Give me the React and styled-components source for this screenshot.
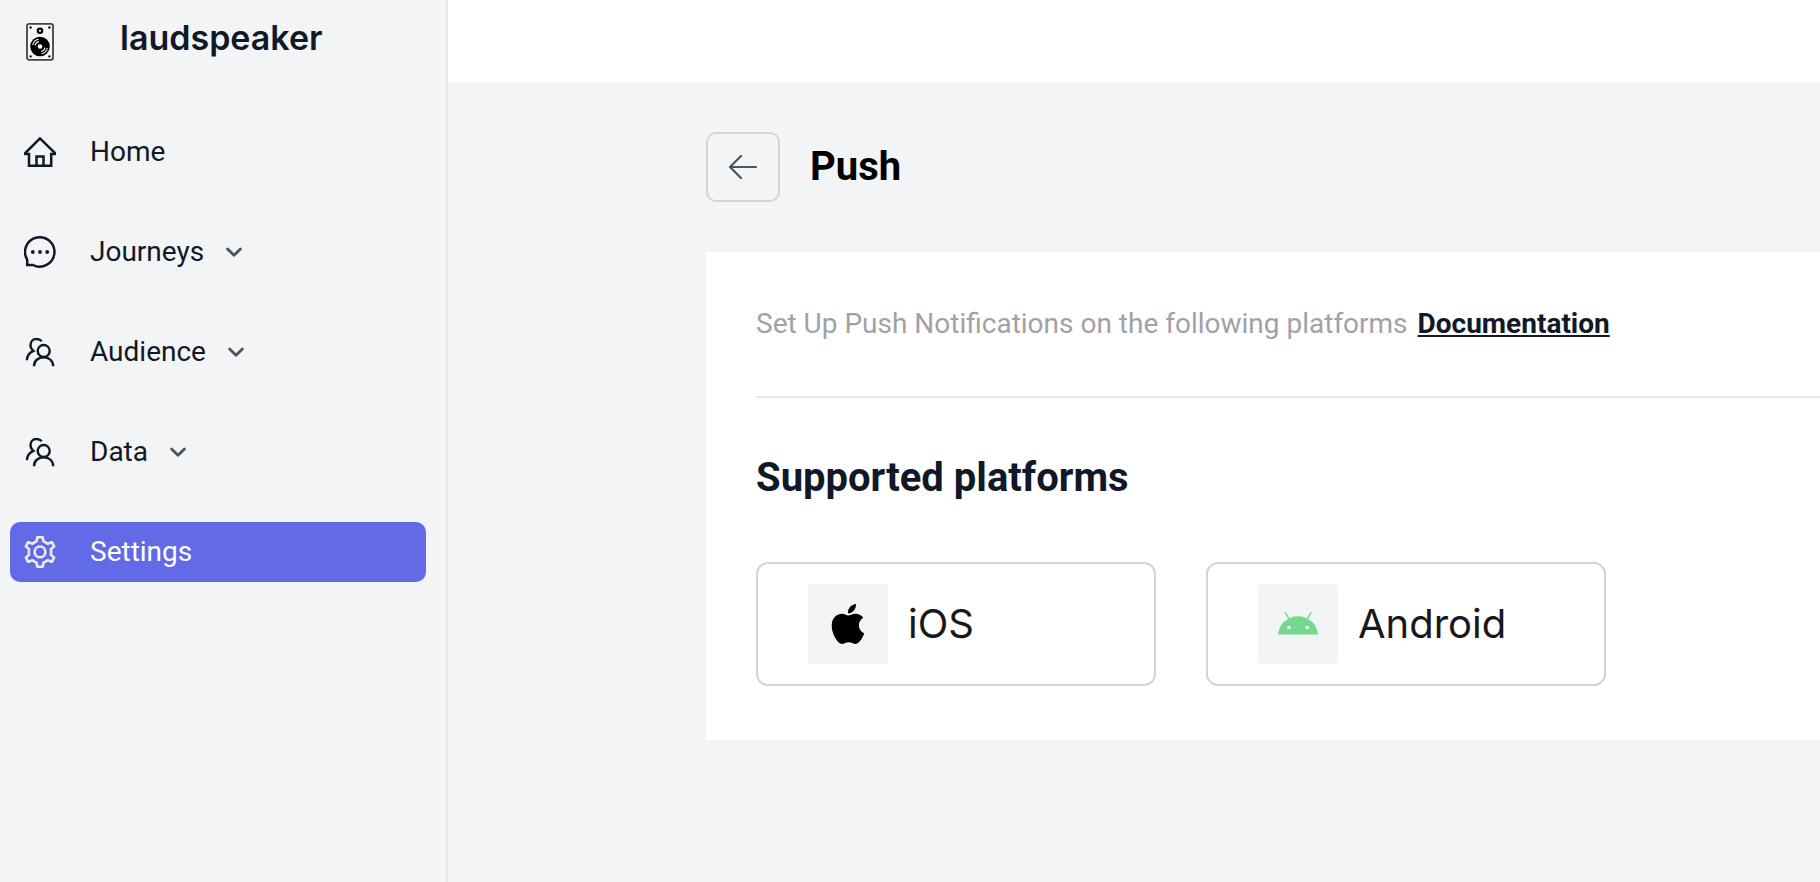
import React from "react";
import styled, { createGlobalStyle } from "styled-components";
import { SiApple } from "react-icons/si";

const GlobalStyle = createGlobalStyle`
  *, *::before, *::after { box-sizing: border-box; }
  body {
    margin: 0;
    background: #f3f4f6;
    color: #111827;
    font-family: Roboto, "Liberation Sans", sans-serif;
    font-size: 28px;
    line-height: 40px;
  }
  h1, h2, p, ul { margin: 0; padding: 0; }
  button { font: inherit; color: inherit; cursor: pointer; }
`;

const Layout = styled.div`
  display: flex;
  min-height: 100vh;
`;

const Sidebar = styled.aside`
  flex: 0 0 448px;
  border-right: 2px solid #e5e7eb;
`;

const Brand = styled.div`
  display: flex;
  align-items: center;
  gap: 64px;
  height: 82px;
  padding-left: 24px;
`;

const BrandName = styled.span`
  font-family: Inter, sans-serif;
  font-size: 34px;
  font-weight: 600;
  line-height: 40px;
  padding-bottom: 6px;
`;

const NavList = styled.ul`
  display: flex;
  flex-direction: column;
  gap: 40px;
  padding: 40px 20px 40px 10px;
  list-style: none;
`;

const NavLink = styled.a`
  display: flex;
  align-items: center;
  height: 60px;
  padding: 0 14px;
  border-radius: 10px;
  color: ${(p) => (p.$active ? "#ffffff" : "#111827")};
  background: ${(p) => (p.$active ? "#636ae8" : "transparent")};
  text-decoration: none;
`;

const NavLabel = styled.span`
  margin-left: 34px;
  margin-right: 20px;
`;

const Icon = styled.svg`
  display: block;
  flex: none;
  fill: none;
  stroke: currentColor;
`;

const Content = styled.div`
  flex: 1;
  min-width: 0;
`;

const TopBar = styled.header`
  height: 82px;
  background: #ffffff;
`;

const Page = styled.main`
  padding: 50px 0 50px 258px;
`;

const PageHeader = styled.div`
  display: flex;
  align-items: center;
  gap: 30px;
  margin-bottom: 50px;
`;

const BackButton = styled.button`
  display: flex;
  align-items: center;
  justify-content: center;
  width: 74px;
  height: 70px;
  padding: 0;
  border: 2px solid #d1d5db;
  border-radius: 10px;
  background: transparent;
  color: #4b5563;
`;

const PageTitle = styled.h1`
  color: #000000;
  font-size: 40px;
  font-weight: 700;
  line-height: 60px;
`;

const Panel = styled.section`
  padding: 50px 0 54px 50px;
  background: #ffffff;
`;

const Intro = styled.p`
  padding-bottom: 50px;
  border-bottom: 2px solid #e5e7eb;
  color: #a1a1a6;
  line-height: 44px;
`;

const DocLink = styled.a`
  margin-left: 10px;
  color: #111827;
  font-weight: 700;
  text-decoration: underline;
`;

const SectionTitle = styled.h2`
  margin: 50px 0 54px;
  font-size: 40px;
  font-weight: 700;
  line-height: 60px;
`;

const Platforms = styled.div`
  display: flex;
  flex-wrap: wrap;
  gap: 50px;
`;

const PlatformButton = styled.button`
  display: flex;
  align-items: center;
  gap: 20px;
  width: 400px;
  padding: 20px 50px;
  border: 2px solid #d1d5db;
  border-radius: 12px;
  background: #ffffff;
  color: #18181b;
  font-family: Inter, sans-serif;
  font-size: 40px;
  font-weight: 400;
  line-height: 60px;
`;

const Tile = styled.span`
  display: flex;
  align-items: center;
  justify-content: center;
  width: 80px;
  height: 80px;
  border-radius: 4px;
  background: #f3f4f6;
  color: #000000;
`;

const SpeakerLogo = () => (
  <Icon width="32" height="40" viewBox="0 0 32 40" aria-hidden="true">
    <rect x="3" y="2.8" width="26" height="36" rx="2" fill="#f6f6f7" stroke="#444" strokeWidth="1.8" />
    <g fill="#111" stroke="none">
      <circle cx="6.6" cy="6.5" r="1.2" />
      <circle cx="25.4" cy="6.5" r="1.2" />
      <circle cx="6.6" cy="35.4" r="1.2" />
      <circle cx="25.4" cy="35.4" r="1.2" />
      <circle cx="16" cy="25.5" r="9.8" fill="#000" />
      <circle cx="16" cy="25.5" r="2.3" fill="#fff" />
    </g>
    <circle cx="16" cy="9.8" r="2.2" stroke="#000" strokeWidth="2.2" fill="#fff" />
    <path d="M8.7 24A7.5 7.5 0 0 1 14.5 18.2M11 24.4A5.1 5.1 0 0 1 14.9 20.5M23.3 27A7.5 7.5 0 0 1 17.5 32.8M21 26.6A5.1 5.1 0 0 1 17.1 30.5" stroke="#fff" strokeWidth="1.1" />
  </Icon>
);

const HomeIcon = () => (
  <Icon width="32" height="32" viewBox="0 0 32 32" strokeWidth="2.5" aria-hidden="true">
    <path d="M16 2.4 1.2 17v.9H5V29.7h22.2V17.9H31V17zM12.5 29.7V20.5h7v9.2" />
  </Icon>
);

const ChatIcon = () => (
  <Icon width="32" height="32" viewBox="0 0 32 32" strokeWidth="2.5" aria-hidden="true">
    <path d="M3.2 23.6A14.7 14.7 0 1 1 9 29H3.2z" />
    <g fill="currentColor" stroke="none">
      <circle cx="8.8" cy="16" r="1.9" />
      <circle cx="16" cy="16" r="1.9" />
      <circle cx="23.2" cy="16" r="1.9" />
    </g>
  </Icon>
);

const PeopleIcon = () => (
  <Icon width="32" height="32" viewBox="0 0 32 32" strokeWidth="2.4" aria-hidden="true">
    <circle cx="19.7" cy="15" r="6" />
    <path d="M10 30.2C10 25 14.3 21.2 19.7 21.2S29.2 25 29.2 30.2" />
    <path d="M17.8 5.3A7 7 0 0 0 12.4 3C8.800 3 6.500 5.700 6.500 9 6.500 11.500 7.700 13.500 9.400 14.900 5.700 16.600 3.100 19.800 2.900 24.200" />
  </Icon>
);

const GearIcon = () => (
  <Icon width="32" height="32" viewBox="0 0 32 32" strokeWidth="2.6" strokeLinejoin="round" color="#efe9dc" aria-hidden="true">
    <path d="M13.4 1.2h5.2l1 4.3q2 .7 3.9 2.2l4.4-1.5 2.2 4.2-3.2 2.9q.5 2.7 0 5.4l3.2 2.9-2.2 4.2-4.4-1.5q-1.9 1.5-3.9 2.2l-1 4.3h-5.2l-1-4.3q-2-.7-3.9-2.2l-4.4 1.5-2.2-4.2 3.2-2.9q-.5-2.7 0-5.4L1.9 10.4l2.2-4.2 4.4 1.5q1.9-1.5 3.9-2.2z" />
    <circle cx="16" cy="15.9" r="5.4" />
  </Icon>
);

const ChevronIcon = () => (
  <Icon width="20" height="20" viewBox="0 0 20 20" strokeWidth="2.9" strokeLinecap="round" strokeLinejoin="round" color="#4b5563" aria-hidden="true">
    <path d="m3.6 7 6.4 6.2L16.4 7" />
  </Icon>
);

const ArrowLeftIcon = () => (
  <Icon width="28" height="24" viewBox="0 0 28 24" strokeWidth="2.2" strokeLinecap="round" strokeLinejoin="round" aria-hidden="true">
    <path d="M27 12H1M12 1 1 12l11 11" />
  </Icon>
);

const AndroidIcon = () => (
  <Icon width="40" height="24" viewBox="0 0 40 24" aria-hidden="true">
    <path d="M0 22.6C.8 12.4 9.2 4.2 20 4.2s19.2 8.2 20 18.4z" fill="#74d98f" stroke="none" />
    <path d="m7.4.7 3.9 6.6M33 .7 29.1 7.3" stroke="#74d98f" strokeWidth="1.4" strokeLinecap="round" />
    <circle cx="11" cy="15.5" r="1.7" fill="#fff" stroke="none" />
    <circle cx="29.2" cy="15.5" r="1.7" fill="#fff" stroke="none" />
  </Icon>
);

const navItems = [
  { label: "Home", icon: HomeIcon },
  { label: "Journeys", icon: ChatIcon, expandable: true },
  { label: "Audience", icon: PeopleIcon, expandable: true },
  { label: "Data", icon: PeopleIcon, expandable: true },
  { label: "Settings", icon: GearIcon, active: true },
];

export default function App() {
  return (
    <>
      <GlobalStyle />
      <Layout>
        <Sidebar>
          <Brand>
            <SpeakerLogo />
            <BrandName>laudspeaker</BrandName>
          </Brand>
          <nav aria-label="Main">
            <NavList>
              {navItems.map(({ label, icon: ItemIcon, expandable, active }) => (
                <li key={label}>
                  <NavLink href="#" $active={active} aria-current={active ? "page" : undefined}>
                    <ItemIcon />
                    <NavLabel>{label}</NavLabel>
                    {expandable && <ChevronIcon />}
                  </NavLink>
                </li>
              ))}
            </NavList>
          </nav>
        </Sidebar>
        <Content>
          <TopBar />
          <Page>
            <PageHeader>
              <BackButton type="button" aria-label="Back">
                <ArrowLeftIcon />
              </BackButton>
              <PageTitle>Push</PageTitle>
            </PageHeader>
            <Panel>
              <Intro>
                Set Up Push Notifications on the following platforms
                <DocLink href="#">Documentation</DocLink>
              </Intro>
              <SectionTitle>Supported platforms</SectionTitle>
              <Platforms>
                <PlatformButton type="button">
                  <Tile>
                    <SiApple size={40} aria-hidden="true" />
                  </Tile>
                  iOS
                </PlatformButton>
                <PlatformButton type="button">
                  <Tile>
                    <AndroidIcon />
                  </Tile>
                  Android
                </PlatformButton>
              </Platforms>
            </Panel>
          </Page>
        </Content>
      </Layout>
    </>
  );
}
